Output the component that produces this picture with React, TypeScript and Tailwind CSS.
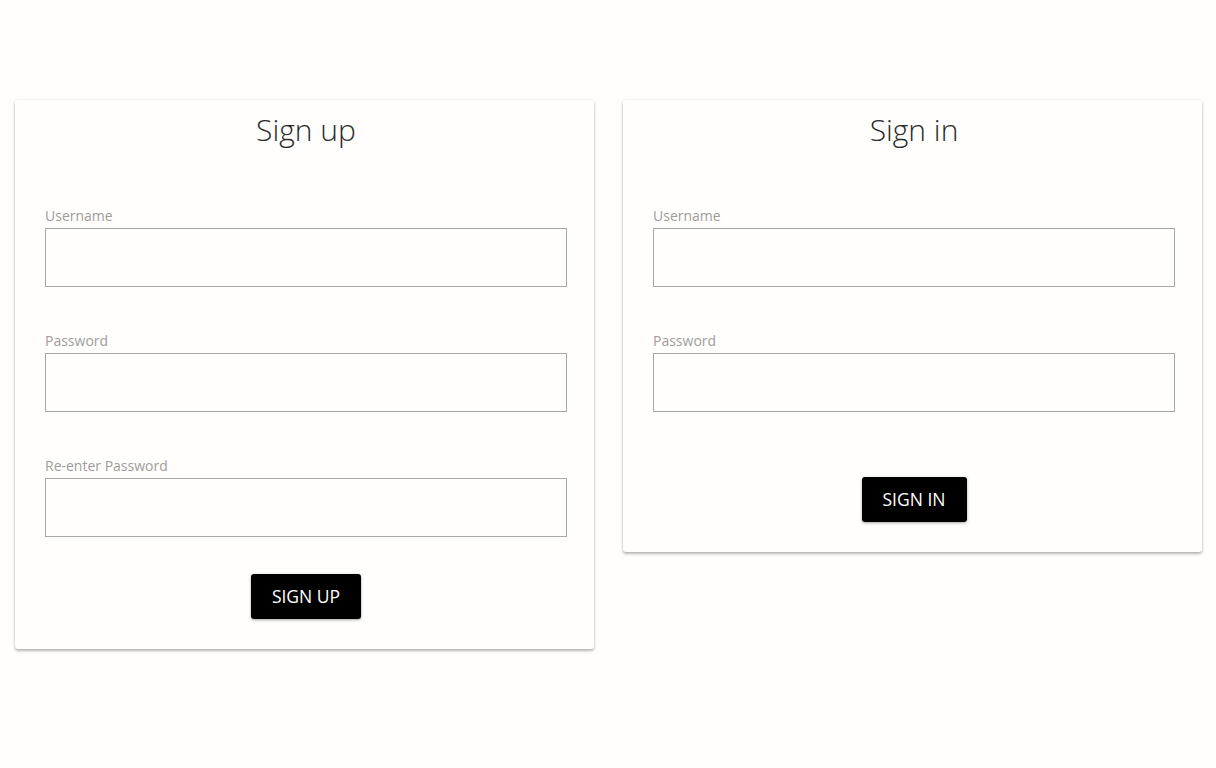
function Field({ label }: { label: string }) {
  return (
    <div className="flex flex-col">
      <label className="text-[14px] leading-[20px] text-[#a09c9a]">{label}</label>
      <input
        type="text"
        className="mt-[2px] h-[59px] w-full border border-[#a8a8a8] bg-transparent px-2 outline-none"
      />
    </div>
  );
}

function Card({
  title,
  fields,
  button,
  buttonGap,
}: {
  title: string;
  fields: string[];
  button: string;
  buttonGap: string;
}) {
  return (
    <div className="w-[579px] rounded-[3px] bg-[#fffefd] pl-[30px] pr-[27px] pt-[10px] pb-[30px] shadow-[0_2px_3px_rgba(0,0,0,0.28),0_0_3px_rgba(0,0,0,0.08)]">
      <h1 className="text-center text-[30px] font-light leading-[40px] text-[#2a2a2a]">{title}</h1>
      <div className="mt-[56px] flex flex-col gap-[44px]">
        {fields.map((f) => (
          <Field key={f} label={f} />
        ))}
      </div>
      <div className={`flex justify-center ${buttonGap}`}>
        <button className="h-[45px] rounded-[3px] bg-black px-[21px] text-[17.5px] uppercase text-white shadow-[0_1px_3px_rgba(0,0,0,0.35)]">
          {button}
        </button>
      </div>
    </div>
  );
}

export default function App() {
  return (
    <div
      className="min-h-screen bg-[#fffefd] pt-[100px] pl-[15px]"
      style={{ fontFamily: '"Open Sans", "Noto Sans", sans-serif' }}
    >
      <div className="flex items-start gap-[29px]">
        <Card
          title="Sign up"
          fields={["Username", "Password", "Re-enter Password"]}
          button="Sign up"
          buttonGap="mt-[37px]"
        />
        <Card
          title="Sign in"
          fields={["Username", "Password"]}
          button="Sign in"
          buttonGap="mt-[65px]"
        />
      </div>
    </div>
  );
}
